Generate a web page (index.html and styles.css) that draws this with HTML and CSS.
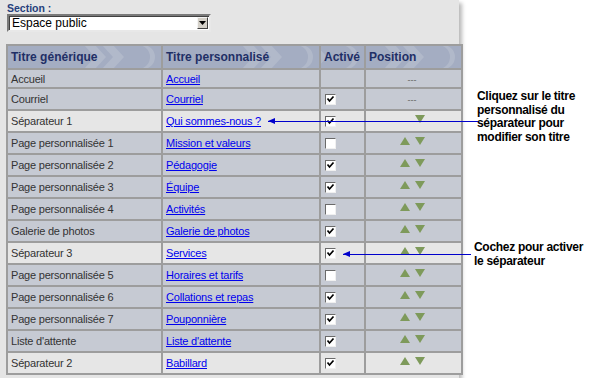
FILE: index.html
```html
<!DOCTYPE html>
<html lang="fr">
<head>
    <meta charset="UTF-8">
    <title>Sections</title>
    <link rel="stylesheet" href="styles.css">
</head>
<body>
<div class="page">
    <div class="panel">
        <div class="section-label">Section :</div>
        <div class="select">
            <span class="select-value">Espace public</span>
            <span class="select-button">
                <svg width="7" height="4" viewBox="0 0 7 4"><path d="M0 0 H7 L3.5 4 Z" fill="#000"/></svg>
            </span>
        </div>

        <table class="grid">
            <thead>
                <tr>
                    <th class="col-gen">Titre générique</th>
                    <th class="col-perso">Titre personnalisé</th>
                    <th class="col-active">Activé</th>
                    <th class="col-pos">Position</th>
                </tr>
            </thead>
            <tbody>
                <tr class="first">
                    <td>Accueil</td>
                    <td><a href="#">Accueil</a></td>
                    <td></td>
                    <td class="pos"><span class="dash">---</span></td>
                </tr>
                <tr>
                    <td>Courriel</td>
                    <td><a href="#">Courriel</a></td>
                    <td><span class="check on"></span></td>
                    <td class="pos"><span class="dash">---</span></td>
                </tr>
                <tr class="sep">
                    <td>Séparateur 1</td>
                    <td><a href="#">Qui sommes-nous ?</a></td>
                    <td><span class="check on"></span></td>
                    <td class="pos"><span class="up hidden"></span><span class="down"></span></td>
                </tr>
                <tr>
                    <td>Page personnalisée 1</td>
                    <td><a href="#">Mission et valeurs</a></td>
                    <td><span class="check"></span></td>
                    <td class="pos"><span class="up"></span><span class="down"></span></td>
                </tr>
                <tr>
                    <td>Page personnalisée 2</td>
                    <td><a href="#">Pédagogie</a></td>
                    <td><span class="check on"></span></td>
                    <td class="pos"><span class="up"></span><span class="down"></span></td>
                </tr>
                <tr>
                    <td>Page personnalisée 3</td>
                    <td><a href="#">Équipe</a></td>
                    <td><span class="check on"></span></td>
                    <td class="pos"><span class="up"></span><span class="down"></span></td>
                </tr>
                <tr>
                    <td>Page personnalisée 4</td>
                    <td><a href="#">Activités</a></td>
                    <td><span class="check"></span></td>
                    <td class="pos"><span class="up"></span><span class="down"></span></td>
                </tr>
                <tr>
                    <td>Galerie de photos</td>
                    <td><a href="#">Galerie de photos</a></td>
                    <td><span class="check on"></span></td>
                    <td class="pos"><span class="up"></span><span class="down"></span></td>
                </tr>
                <tr class="sep">
                    <td>Séparateur 3</td>
                    <td><a href="#">Services</a></td>
                    <td><span class="check on"></span></td>
                    <td class="pos"><span class="up"></span><span class="down"></span></td>
                </tr>
                <tr>
                    <td>Page personnalisée 5</td>
                    <td><a href="#">Horaires et tarifs</a></td>
                    <td><span class="check"></span></td>
                    <td class="pos"><span class="up"></span><span class="down"></span></td>
                </tr>
                <tr>
                    <td>Page personnalisée 6</td>
                    <td><a href="#">Collations et repas</a></td>
                    <td><span class="check on"></span></td>
                    <td class="pos"><span class="up"></span><span class="down"></span></td>
                </tr>
                <tr>
                    <td>Page personnalisée 7</td>
                    <td><a href="#">Pouponnière</a></td>
                    <td><span class="check on"></span></td>
                    <td class="pos"><span class="up"></span><span class="down"></span></td>
                </tr>
                <tr>
                    <td>Liste d'attente</td>
                    <td><a href="#">Liste d'attente</a></td>
                    <td><span class="check on"></span></td>
                    <td class="pos"><span class="up"></span><span class="down"></span></td>
                </tr>
                <tr class="sep">
                    <td>Séparateur 2</td>
                    <td><a href="#">Babillard</a></td>
                    <td><span class="check on"></span></td>
                    <td class="pos"><span class="up"></span><span class="down"></span></td>
                </tr>
            </tbody>
        </table>
    </div>

    <div class="notes">
        <p class="note note-title">Cliquez sur le titre<br>personnalisé du<br>séparateur pour<br>modifier son titre</p>
        <p class="note note-check">Cochez pour activer<br>le séparateur</p>
    </div>

    <!-- flèches des annotations -->
    <div class="pointer pointer-title"></div>
    <div class="pointer pointer-check"></div>
</div>
</body>
</html>
```

FILE: styles.css
```css
body {
    margin: 0;
    background: #fff;
    font-family: "Liberation Sans", Arial, sans-serif;
    font-size: 11px;
    color: #333;
}

.page {
    position: relative;
    display: flex;
    align-items: flex-start;
}

.panel {
    width: 447px;
    padding: 2px 6px 3px 6px;
    background: #e5e5e5;
    box-shadow: 3px 3px 4px rgba(0, 0, 0, 0.28);
}

.section-label {
    padding-left: 1px;
    font-size: 10.5px;
    font-weight: bold;
    line-height: 12px;
    color: #263f7c;
}

/* liste déroulante façon Windows classique */
.select {
    display: flex;
    align-items: center;
    width: 200px;
    height: 14px;
    margin-left: 1px;
    background: #fff;
    border: 2px solid;
    border-color: #7a7a7a #e8e8e8 #e8e8e8 #7a7a7a;
    box-shadow: inset 1px 1px 0 #404040;
}

.select-value {
    flex: 1;
    padding-left: 3px;
    font-size: 12px;
    line-height: 14px;
    color: #000;
}

.select-button {
    display: flex;
    align-items: center;
    justify-content: center;
    width: 11px;
    height: 12px;
    margin-right: 1px;
    background: #d4d0c8;
    border: 1px solid;
    border-color: #f4f4f4 #404040 #404040 #f4f4f4;
    box-sizing: border-box;
}

.grid {
    margin-top: 12px;
    width: 447px;
    border-collapse: collapse;
    table-layout: fixed;
}

.grid th,
.grid td {
    border: 2px solid #9d9d9d;
    padding: 0 3px;
    text-align: left;
    white-space: nowrap;
}

.grid th {
    height: 22px;
    font-size: 12px;
    font-weight: bold;
    color: #1f2f66;
    background-color: #a4adc2;
    background-image: url("data:image/svg+xml,%3Csvg xmlns='http://www.w3.org/2000/svg' width='75' height='24'%3E%3Cg fill='%23b1b9ca'%3E%3Cpolygon points='0,0 11,0 22,12 11,24 0,24 11,12'/%3E%3Cpolygon points='18,0 29,0 40,12 29,24 18,24 29,12'/%3E%3Cpath d='M54 0 h5 a12 12 0 0 1 0 24 h-5 a12 12 0 0 0 0 -24 z'/%3E%3C/g%3E%3C/svg%3E");
    background-repeat: no-repeat;
    background-position: right 2px center;
}

.col-gen { width: 147px; }
.col-perso { width: 150px; }
.col-active { width: 37px; }
.col-pos { width: 89px; }

.grid td {
    height: 20px;
    letter-spacing: -0.2px;
    background: #c6cad3;
}

.grid tr.first td {
    height: 17px;
}

.grid tr.sep td {
    background: #e6e6e6;
}

.grid a {
    color: #0000ee;
}

.check {
    display: inline-block;
    vertical-align: middle;
    width: 9px;
    height: 9px;
    margin-left: 1px;
    background: #fff;
    border: 1px solid;
    border-color: #6a6a6a #f0f0f0 #f0f0f0 #6a6a6a;
}

.check.on {
    background: #fff url("data:image/svg+xml,%3Csvg xmlns='http://www.w3.org/2000/svg' width='9' height='9'%3E%3Cpath d='M1.5 3.5 L3.5 6 L7.5 1.5' fill='none' stroke='%23000' stroke-width='1.7'/%3E%3C/svg%3E") no-repeat center;
}

.pos {
    text-align: center !important;
    padding-right: 6px !important;
}

.dash {
    font-size: 9px;
    color: #666;
    letter-spacing: 0;
}

.up,
.down {
    display: inline-block;
    vertical-align: 2px;
    width: 0;
    height: 0;
    border-left: 5px solid transparent;
    border-right: 5px solid transparent;
}

.up {
    border-bottom: 8px solid #7e9a5b;
    margin-right: 5px;
}

.down {
    border-top: 8px solid #7e9a5b;
}

.hidden {
    visibility: hidden;
}

.notes {
    padding-left: 18px;
}

.note {
    margin: 0;
    font-size: 12px;
    font-weight: bold;
    line-height: 13.5px;
    letter-spacing: -0.3px;
    color: #000;
}

.note-title {
    margin-top: 90px;
}

.note-check {
    margin-top: 97px;
    margin-left: -3px;
}

.pointer {
    position: absolute;
    height: 1px;
    background: #0000cc;
}

.pointer::before {
    content: "";
    position: absolute;
    left: 0;
    top: -3px;
    border-top: 3.5px solid transparent;
    border-bottom: 3.5px solid transparent;
    border-right: 7px solid #0000cc;
}

.pointer-title {
    left: 268px;
    top: 121px;
    width: 210px;
}

.pointer-check {
    left: 343px;
    top: 254px;
    width: 128px;
}
```
